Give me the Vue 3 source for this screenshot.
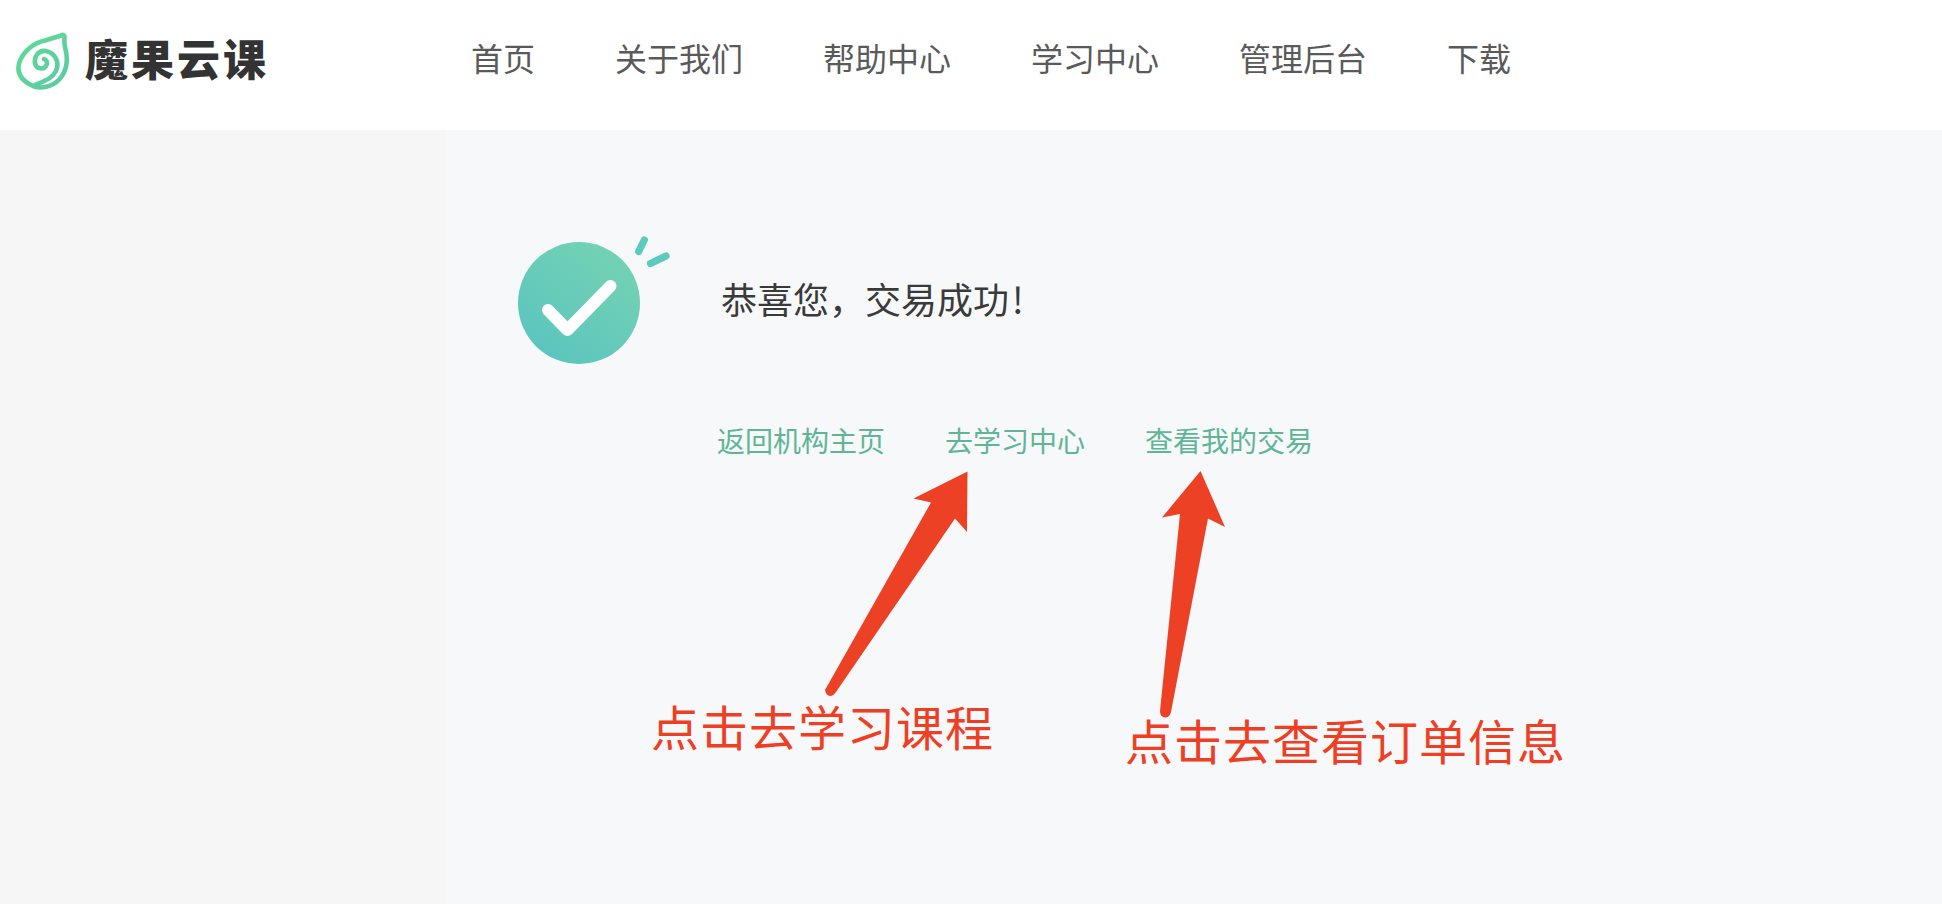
<script setup>
const navItems = ['首页', '关于我们', '帮助中心', '学习中心', '管理后台', '下载']
const links = ['返回机构主页', '去学习中心', '查看我的交易']
</script>

<template>
  <div class="page">
    <header class="header">
      <div class="brand">
        <svg class="logo" viewBox="0 0 70 70" width="70" height="70">
          <defs>
            <linearGradient id="lg" x1="0" y1="0" x2="1" y2="1">
              <stop offset="0" stop-color="#5fdc96" />
              <stop offset="1" stop-color="#5cc9a4" />
            </linearGradient>
          </defs>
          <path d="M49.3 9 C44 11 37 13 32 14.5 C20 17 10 26 6.5 36 C3 47 9 55 20 60 C31 64 43 59 49 50 C55 41 55 32 52 21 C51 17 51.5 13 51.5 11 C51.5 9 50 8.5 49.3 9 Z M20 60 C30 55 38 54 43 45 C47 36 42 27 33 25 C25 24 21 31 22 37 C23 43 30 44 33 40 C35 37 34 34 31 33" fill="none" stroke="url(#lg)" stroke-width="4.6" stroke-linecap="round" stroke-linejoin="round" />
        </svg>
        <span class="brand-name">魔果云课</span>
      </div>
      <nav class="nav">
        <a v-for="item in navItems" :key="item" class="nav-item">{{ item }}</a>
      </nav>
    </header>
    <main class="main">
      <aside class="side"></aside>
      <section class="content">
        <div class="result">
          <svg class="check" viewBox="0 0 156 132" width="156" height="132">
            <defs>
              <linearGradient id="cg" x1="0.15" y1="0.95" x2="0.85" y2="0.05">
                <stop offset="0" stop-color="#5bc4bf" />
                <stop offset="1" stop-color="#74d3b3" />
              </linearGradient>
            </defs>
            <circle cx="61" cy="71" r="61" fill="url(#cg)" />
            <path d="M30 78 L49.5 98 L92.5 54" fill="none" stroke="#fff" stroke-width="12" stroke-linecap="round" stroke-linejoin="round" />
            <path d="M120.7 19.5 L126.3 8 M132.5 31.5 L148 24" fill="none" stroke="#5ccbbf" stroke-width="7.3" stroke-linecap="round" />
          </svg>
          <h1 class="title">恭喜您，交易成功<span class="bang">!</span></h1>
        </div>
        <div class="links">
          <a v-for="link in links" :key="link" class="link">{{ link }}</a>
        </div>
      </section>
      <svg class="arrows" viewBox="0 0 1942 904" width="1942" height="904">
        <path d="M967.5 471.5 L913.5 498.5 L931 502.5 L825 690 Q826 696 831 696 Q834 695 836 692 L955 518.5 L967 532 Z" fill="#ec4125" />
        <path d="M1200.5 471 L1162 517.5 L1180 514 L1160 711 Q1160 717 1165.5 717.5 Q1170 717 1171 712 L1208 518.5 L1225 527 Z" fill="#ec4125" />
      </svg>
      <span class="note note-a">点击去学习课程</span>
      <span class="note note-b">点击去查看订单信息</span>
    </main>
  </div>
</template>

<style scoped>
.page {
  position: relative;
  width: 1942px;
  height: 904px;
  overflow: hidden;
  font-family: "Noto Sans CJK SC", "Noto Sans", sans-serif;
}
.header {
  display: flex;
  align-items: center;
  height: 130px;
  box-sizing: border-box;
  padding-bottom: 16px;
  background: #fff;
}
.brand {
  display: flex;
  align-items: center;
  width: 471px;
  padding-left: 13px;
  box-sizing: border-box;
  flex: none;
}
.logo {
  flex: none;
  margin-top: 8px;
}
.brand-name {
  margin-left: 2px;
  font-size: 43px;
  font-weight: 900;
  letter-spacing: 3px;
  color: #333;
  line-height: 1;
}
.nav {
  display: flex;
  gap: 80px;
}
.nav-item {
  font-size: 32px;
  font-weight: 400;
  color: #5a5a5a;
  line-height: 1;
}
.main {
  display: flex;
  height: 774px;
  background: #f7f8fa;
}
.side {
  width: 446px;
  flex: none;
  background: #f6f6f6;
}
.content {
  flex: 1;
  padding-top: 102px;
}
.result {
  display: flex;
  align-items: flex-start;
  padding-left: 72px;
}
.check {
  flex: none;
}
.title {
  margin: 38px 0 0 47px;
  font-size: 36px;
  font-weight: 400;
  color: #3a3a3a;
  line-height: 56px;
}
.bang {
  margin-left: 3px;
}
.links {
  display: flex;
  gap: 60px;
  margin-top: 56px;
  padding-left: 271px;
}
.link {
  font-size: 28px;
  font-weight: 400;
  color: #5fb596;
  line-height: 40px;
}
.arrows {
  position: absolute;
  left: 0;
  top: 0;
  pointer-events: none;
}
.note {
  position: absolute;
  font-size: 48px;
  font-weight: 400;
  letter-spacing: 1px;
  color: #ee3f24;
  line-height: 60px;
  white-space: nowrap;
}
.note-a {
  left: 651px;
  top: 695px;
}
.note-b {
  left: 1125px;
  top: 709px;
}
</style>
